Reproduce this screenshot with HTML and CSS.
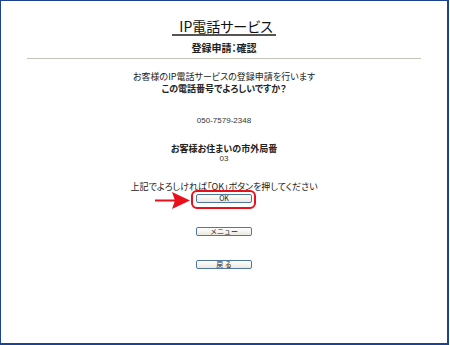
FILE: index.html
```html
<!DOCTYPE html>
<html lang="ja">
<head>
    <meta charset="UTF-8">
    <title>IP電話サービス</title>
    <link rel="stylesheet" href="styles.css">
</head>
<body>
    <div class="page">
        <div class="title-row">
            <span class="title">IP電話サービス</span>
        </div>
        <div class="subtitle">登録申請：確認</div>
        <div class="rule"></div>

        <div class="msg">
            <div>お客様のIP電話サービスの登録申請を行います</div>
            <div class="strong">この電話番号でよろしいですか？</div>
        </div>

        <div class="number">050-7579-2348</div>

        <div class="area">
            <div class="strong">お客様お住まいの市外局番</div>
            <div class="number">03</div>
        </div>

        <div class="note">上記でよろしければ「OK」ボタンを押してください</div>

        <div class="btn-row first">
            <span class="btn-wrap">
                <svg class="arrow" width="36" height="18" viewBox="0 0 36 18">
                    <rect x="0" y="7.5" width="20" height="2" fill="#e8101a"/>
                    <polygon points="17,0 35,8.5 17,17 20,8.5" fill="#e8101a"/>
                </svg>
                <button class="btn">OK</button>
                <span class="ring"></span>
            </span>
        </div>
        <div class="btn-row">
            <button class="btn">メニュー</button>
        </div>
        <div class="btn-row">
            <button class="btn">戻 る</button>
        </div>
    </div>
</body>
</html>
```

FILE: styles.css
```css
body {
  margin:0;
  background:#fff;
  font-family:"Noto Sans CJK JP", "Liberation Sans", sans-serif;
  font-feature-settings:"palt";
  color:#222;
}
.page {
  width:449px;
  height:345px;
  box-sizing:border-box;
  border:1px solid #1d4290;
  border-width:1px 2px 2px 1px;
  padding-top:16px;
  text-align:center;
}
.title-row {
  line-height:16px;
}
.title {
  display:inline-block;
  font-size:14px;
  line-height:16px;
  padding:0 3px 0 7px;
  border-bottom:2px solid #555;
  color:#111;
}
.subtitle {
  margin-top:5px;
  font-size:10px;
  line-height:13px;
  font-weight:bold;
}
.rule {
  margin:4px 26px 0 26px;
  height:1px;
  background:#c6c2b8;
}
.msg {
  margin-top:12px;
  font-size:9px;
  line-height:12px;
}
.strong {
  font-weight:bold;
}
.number {
  font-family:"Liberation Sans", sans-serif;
  font-size:8px;
  line-height:12px;
  color:#333;
}
.msg + .number {
  margin-top:20px;
}
.area {
  margin-top:16px;
  font-size:9px;
  line-height:11px;
}
.area .number {
  line-height:9px;
}
.note {
  margin-top:18px;
  font-size:9px;
  line-height:12px;
}
.btn-row {
  line-height:0;
  margin-top:24px;
}
.btn-row.first {
  margin-top:1px;
}
.btn-wrap {
  position:relative;
  display:inline-block;
}
.btn {
  width:56px;
  height:9px;
  padding:0;
  margin:0;
  box-sizing:border-box;
  border:1px solid #4f77a6;
  border-radius:2px;
  background:linear-gradient(#ffffff, #ece9df);
  font-family:"Noto Sans CJK JP", "Liberation Sans", sans-serif;
  font-size:7px;
  line-height:7px;
  color:#222;
}
.ring {
  position:absolute;
  left:-5px;
  top:-4px;
  width:65px;
  height:19px;
  box-sizing:border-box;
  border:2px solid #e8101a;
  border-radius:6px;
}
.arrow {
  position:absolute;
  left:-41px;
  top:-2px;
}
```
